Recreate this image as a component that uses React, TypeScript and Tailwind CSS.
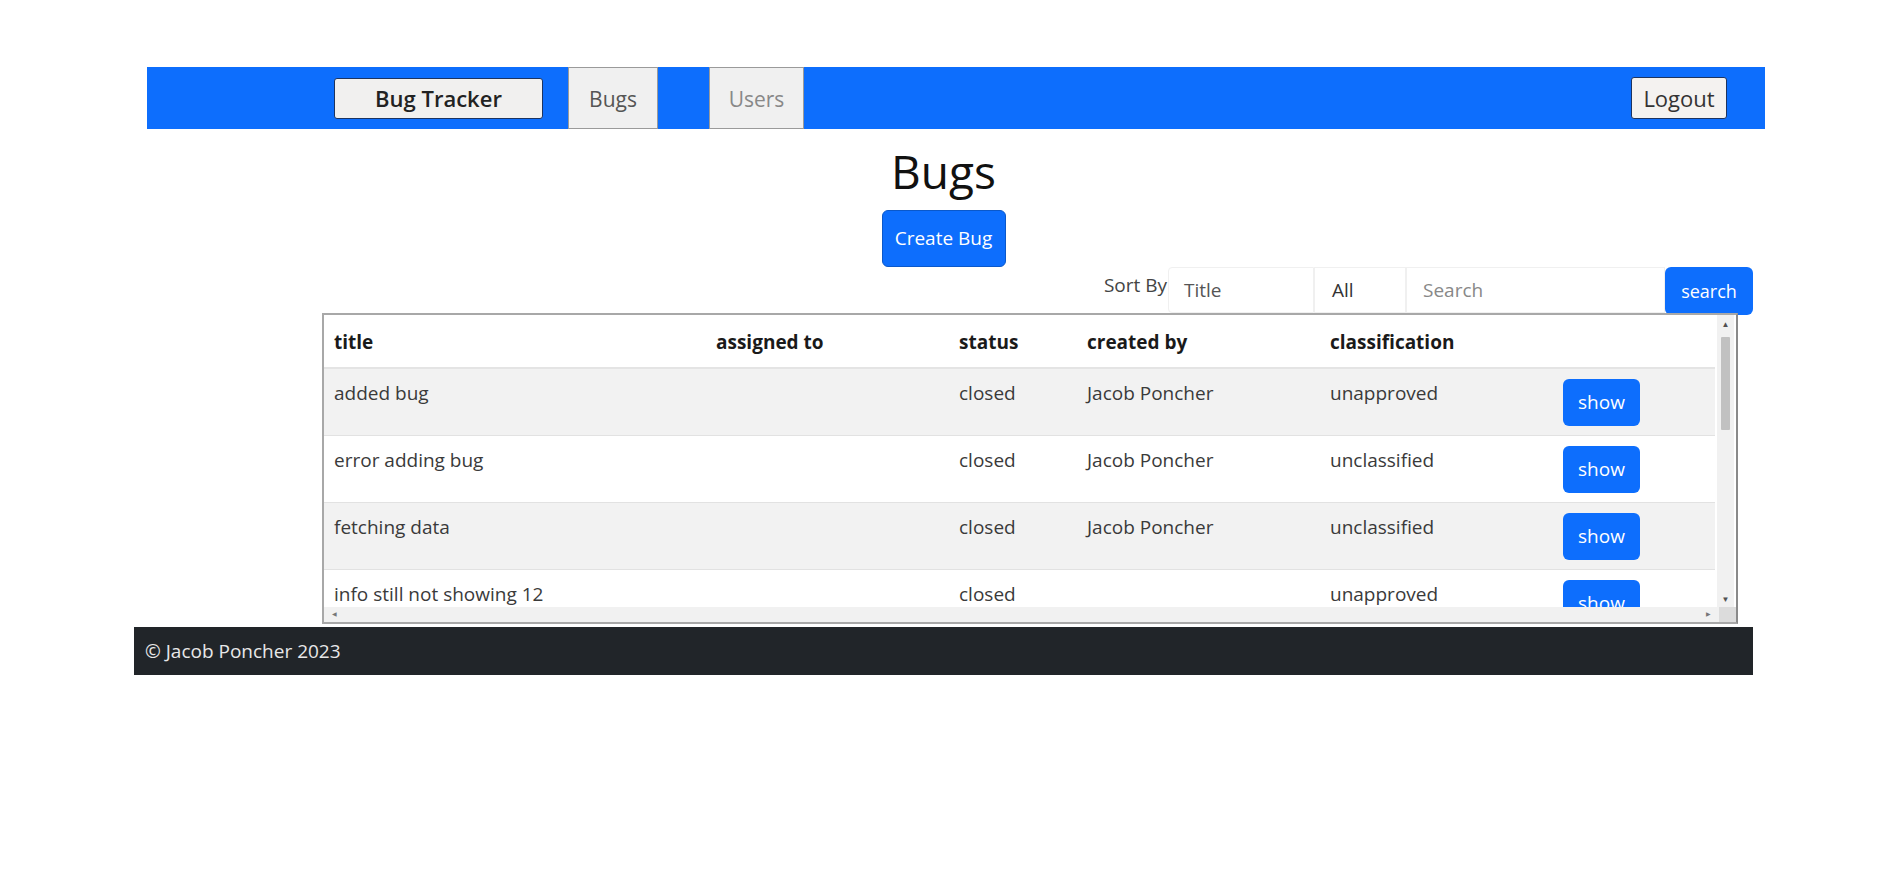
import React from "react";

const rows = [
  { title: "added bug", assigned: "", status: "closed", created: "Jacob Poncher", cls: "unapproved" },
  { title: "error adding bug", assigned: "", status: "closed", created: "Jacob Poncher", cls: "unclassified" },
  { title: "fetching data", assigned: "", status: "closed", created: "Jacob Poncher", cls: "unclassified" },
  { title: "info still not showing 12", assigned: "", status: "closed", created: "", cls: "unapproved" },
];

const cols = "grid grid-cols-[382px_243px_128px_243px_233px_162px]";

export default function App() {
  return (
    <div className="min-h-screen bg-white font-['Open_Sans',sans-serif] text-[#212529] pt-[67px]">
      <nav className="ml-[147px] w-[1618px] h-[62px] bg-[#0d6efd] flex items-center">
        <button className="ml-[187px] w-[209px] h-[41px] bg-[#f1f0ef] border border-[#1d3460] rounded-[3px] text-[22px] font-semibold text-[#222] leading-none">
          Bug Tracker
        </button>
        <div className="ml-[25px] w-[90px] h-[62px] pt-[3px] bg-[#f0f0f0] border border-[#9a9a9a] flex items-center justify-center text-[21px] text-[#555]">
          Bugs
        </div>
        <div className="ml-[51px] w-[95px] h-[62px] pt-[3px] bg-[#f0f0f0] border border-[#9a9a9a] flex items-center justify-center text-[21px] text-[#888]">
          Users
        </div>
        <div className="flex-1" />
        <button className="mr-[38px] w-[96px] h-[42px] bg-[#f4f2f0] border border-[#1d3460] rounded-[3px] text-[22px] text-[#333] leading-none">
          Logout
        </button>
      </nav>

      <main className="ml-[134px] w-[1619px] flex flex-col items-center">
        <h1 className="mt-[15px] text-[46px] leading-[55px] font-normal text-[#111]">Bugs</h1>
        <button className="mt-[11px] w-[124px] h-[57px] bg-[#0d6efd] rounded-[6px] border border-[#0a58ca] text-white text-[19px] leading-none">
          Create Bug
        </button>

        <div className="self-stretch flex justify-end items-start h-[46px]">
          <span className="text-[19px] text-[#444] mt-[4px] mr-[1px]">Sort By</span>
          <div className="w-[146px] h-[46px] border border-[#f0f0f0] rounded-l-[4px] flex items-center pl-[15px] text-[19px] text-[#555]">
            Title
          </div>
          <div className="w-[92px] h-[46px] border border-[#f0f0f0] flex items-center pl-[17px] text-[19px] text-[#333]">
            All
          </div>
          <div className="w-[259px] h-[46px] border border-[#f0f0f0] flex items-center pl-[16px] text-[19px] text-[#888]">
            Search
          </div>
          <button className="w-[88px] h-[48px] bg-[#0d6efd] rounded-[6px] text-white text-[18px] leading-none">
            search
          </button>
        </div>

        <div className="self-start ml-[188px] w-[1416px] h-[311px] border-2 border-[#a8a8a8] border-r-[#8a8a8a] flex flex-col overflow-hidden">
          <div className="flex h-[292px]">
            <div className="w-[1393px] overflow-hidden text-[19px]">
              <div className={`${cols} w-[1391px] h-[54px] border-b-2 border-[#e4e4e4] font-bold text-[#1a1a1a]`}>
                <div className="px-[10px] pt-[13px]">title</div>
                <div className="px-[10px] pt-[13px]">assigned to</div>
                <div className="px-[10px] pt-[13px]">status</div>
                <div className="px-[10px] pt-[13px]">created by</div>
                <div className="px-[10px] pt-[13px]">classification</div>
                <div />
              </div>
              {rows.map((r, i) => (
                <div
                  key={i}
                  className={`${cols} w-[1391px] h-[67px] border-b border-[#e2e2e2] text-[#3a3a3a] ${i % 2 === 0 ? "bg-[#f2f2f2]" : "bg-white"}`}
                >
                  <div className="px-[10px] pt-[10px]">{r.title}</div>
                  <div className="px-[10px] pt-[10px]">{r.assigned}</div>
                  <div className="px-[10px] pt-[10px]">{r.status}</div>
                  <div className="px-[10px] pt-[10px]">{r.created}</div>
                  <div className="px-[10px] pt-[10px]">{r.cls}</div>
                  <div className="px-[10px] pt-[10px]">
                    <button className="w-[77px] h-[47px] bg-[#0d6efd] rounded-[6px] text-white text-[19px] leading-none">
                      show
                    </button>
                  </div>
                </div>
              ))}
            </div>
            <div className="w-[17px] bg-[#f1f1f1] flex flex-col items-center">
              <div className="h-[17px] flex items-center justify-center text-[8px] text-[#505050]">▲</div>
              <div className="mt-[5px] w-[9px] h-[93px] bg-[#c1c1c1] rounded-[1px]" />
              <div className="flex-1" />
              <div className="h-[17px] flex items-center justify-center text-[8px] text-[#505050]">▼</div>
            </div>
          </div>
          <div className="flex h-[15px] bg-[#f1f1f1]">
            <div className="flex-1 flex items-center justify-between px-[8px] text-[6px] text-[#777]">
              <span>◀</span>
              <span>▶</span>
            </div>
            <div className="w-[17px] bg-[#dcdcdc]" />
          </div>
        </div>
      </main>

      <footer className="ml-[134px] mt-[3px] w-[1619px] h-[48px] bg-[#212529] flex items-center pl-[11px] text-[19px] text-[#e8e8e8]">
        © Jacob Poncher 2023
      </footer>
    </div>
  );
}
